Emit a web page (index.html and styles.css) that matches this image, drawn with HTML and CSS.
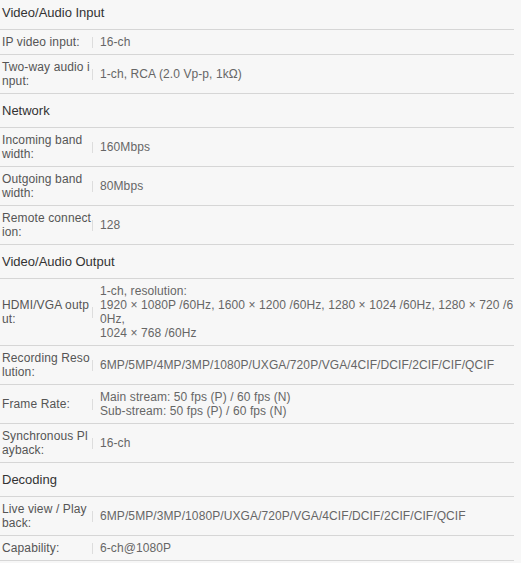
FILE: index.html
```html
<!DOCTYPE html>
<html lang="en">
<head>
    <meta charset="UTF-8">
    <meta name="viewport" content="width=device-width, initial-scale=1.0">
    <title>Specifications</title>
    <link rel="stylesheet" href="styles.css">
</head>
<body>
    <div class="spec-panel">
        <div class="spec-table">
            <div class="spec-group">Video/Audio Input</div>
            <div class="spec-row">
                <div class="spec-label"><span>IP video input:</span></div>
                <div class="spec-value"><span>16-ch</span></div>
            </div>
            <div class="spec-row">
                <div class="spec-label"><span>Two-way audio input:</span></div>
                <div class="spec-value"><span>1-ch, RCA (2.0 Vp-p, 1kΩ)</span></div>
            </div>

            <div class="spec-group">Network</div>
            <div class="spec-row">
                <div class="spec-label"><span>Incoming band width:</span></div>
                <div class="spec-value"><span>160Mbps</span></div>
            </div>
            <div class="spec-row">
                <div class="spec-label"><span>Outgoing band width:</span></div>
                <div class="spec-value"><span>80Mbps</span></div>
            </div>
            <div class="spec-row">
                <div class="spec-label"><span>Remote connection:</span></div>
                <div class="spec-value"><span>128</span></div>
            </div>

            <div class="spec-group">Video/Audio Output</div>
            <div class="spec-row">
                <div class="spec-label"><span>HDMI/VGA output:</span></div>
                <div class="spec-value"><span>1-ch, resolution:<br>1920 × 1080P /60Hz, 1600 × 1200 /60Hz, 1280 × 1024 /60Hz, 1280 × 720 /60Hz,<br>1024 × 768 /60Hz</span></div>
            </div>
            <div class="spec-row">
                <div class="spec-label"><span>Recording Resolution:</span></div>
                <div class="spec-value"><span>6MP/5MP/4MP/3MP/1080P/UXGA/720P/VGA/4CIF/DCIF/2CIF/CIF/QCIF</span></div>
            </div>
            <div class="spec-row">
                <div class="spec-label"><span>Frame Rate:</span></div>
                <div class="spec-value"><span>Main stream: 50 fps (P) / 60 fps (N)<br>Sub-stream: 50 fps (P) / 60 fps (N)</span></div>
            </div>
            <div class="spec-row">
                <div class="spec-label"><span>Synchronous Playback:</span></div>
                <div class="spec-value"><span>16-ch</span></div>
            </div>

            <div class="spec-group">Decoding</div>
            <div class="spec-row">
                <div class="spec-label"><span>Live view / Playback:</span></div>
                <div class="spec-value"><span>6MP/5MP/3MP/1080P/UXGA/720P/VGA/4CIF/DCIF/2CIF/CIF/QCIF</span></div>
            </div>
            <div class="spec-row">
                <div class="spec-label"><span>Capability:</span></div>
                <div class="spec-value"><span>6-ch@1080P</span></div>
            </div>
        </div>
    </div>
</body>
</html>
```

FILE: styles.css
```css
* {
    margin: 0;
    padding: 0;
    box-sizing: border-box;
}

body {
    background-color: #fff;
    font-family: 'Liberation Sans', Arial, sans-serif;
    font-size: 12px;
    line-height: 14px;
    color: #555;
}

.spec-panel {
    width: 521px;
    margin-top: -4px;
    padding-bottom: 20px;
    background-color: #f7f7f7;
}

.spec-table {
    width: 514px;
}

/* 分组标题 */
.spec-group {
    padding: 10px 2px 9px;
    font-size: 13px;
    color: #333;
    border-bottom: 1px solid #d6d6d6;
}

.spec-row {
    display: flex;
    padding: 5px 0;
    border-bottom: 1px solid #d6d6d6;
}

.spec-label {
    width: 92px;
    flex-shrink: 0;
    padding-left: 2px;
    letter-spacing: 0.12px;
    word-break: break-all;
    display: flex;
    align-items: center;
}

.spec-value {
    flex: 1;
    position: relative;
    padding-left: 8px;
    color: #666;
    letter-spacing: 0.09px;
    word-break: break-all;
    display: flex;
    align-items: center;
}

/* 竖线分隔 */
.spec-value:before {
    content: "";
    position: absolute;
    left: 0;
    top: 50%;
    width: 1px;
    height: 11px;
    margin-top: -5px;
    background-color: #ddd;
}
```
